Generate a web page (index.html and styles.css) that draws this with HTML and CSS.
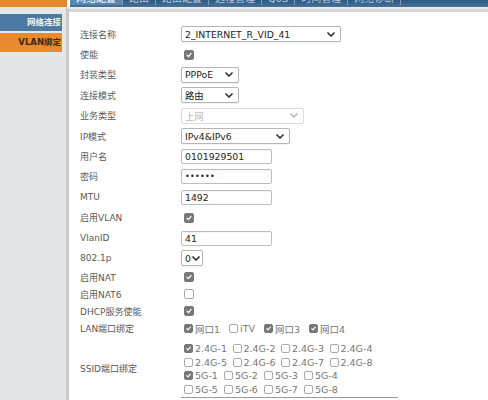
FILE: index.html
```html
<!DOCTYPE html>
<html lang="zh-CN">
<head>
<meta charset="UTF-8" />
<meta name="viewport" content="width=device-width, initial-scale=1" />
<title>网络连接</title>
<link rel="stylesheet" href="styles.css">
</head>
<body>

<div class="top">
  <div class="top-side"></div>
  <div class="tabs">
    <span class="tab on">网络配置</span>
    <span class="tab">路由</span>
    <span class="tab">路由配置</span>
    <span class="tab">远程管理</span>
    <span class="tab">QoS</span>
    <span class="tab">时间管理</span>
    <span class="tab">网络诊断</span>
  </div>
</div>

<div class="wrap">
  <aside class="side">
    <a class="nav blue">网络连接</a>
    <a class="nav orange">VLAN绑定</a>
  </aside>

  <main class="main">
    <div class="form">
      <div class="row"><label>连接名称</label>
        <div class="sel w-name"><span>2_INTERNET_R_VID_41</span><svg class="chev" viewBox="0 0 8 5"><polyline points="1,1 4,4 7,1"/></svg></div>
      </div>
      <div class="row"><label>使能</label><span class="cb on solo"><svg viewBox="0 0 10 10"><polyline points="2.5,5.2 4.3,7 7.6,3"/></svg></span></div>
      <div class="row"><label>封装类型</label>
        <div class="sel w-mode"><span>PPPoE</span><svg class="chev" viewBox="0 0 8 5"><polyline points="1,1 4,4 7,1"/></svg></div>
      </div>
      <div class="row"><label>连接模式</label>
        <div class="sel w-mode"><span>路由</span><svg class="chev" viewBox="0 0 8 5"><polyline points="1,1 4,4 7,1"/></svg></div>
      </div>
      <div class="row"><label>业务类型</label>
        <div class="sel w-svc off"><span>上网</span><svg class="chev" viewBox="0 0 8 5"><polyline points="1,1 4,4 7,1"/></svg></div>
      </div>
      <div class="row"><label>IP模式</label>
        <div class="sel w-ip"><span>IPv4&amp;IPv6</span><svg class="chev" viewBox="0 0 8 5"><polyline points="1,1 4,4 7,1"/></svg></div>
      </div>
      <div class="row"><label>用户名</label><div class="inp">0101929501</div></div>
      <div class="row"><label>密码</label><div class="inp dots">••••••</div></div>
      <div class="row"><label>MTU</label><div class="inp">1492</div></div>
      <div class="row"><label>启用VLAN</label><span class="cb on solo"><svg viewBox="0 0 10 10"><polyline points="2.5,5.2 4.3,7 7.6,3"/></svg></span></div>
      <div class="row"><label>VlanID</label><div class="inp">41</div></div>
      <div class="row"><label>802.1p</label>
        <div class="sel w-pri"><span>0</span><svg class="chev" viewBox="0 0 8 5"><polyline points="1,1 4,4 7,1"/></svg></div>
      </div>
      <div class="row tight"><label>启用NAT</label><span class="cb on solo"><svg viewBox="0 0 10 10"><polyline points="2.5,5.2 4.3,7 7.6,3"/></svg></span></div>
      <div class="row tight"><label>启用NAT6</label><span class="cb solo"></span></div>
      <div class="row tight"><label>DHCP服务使能</label><span class="cb on solo"><svg viewBox="0 0 10 10"><polyline points="2.5,5.2 4.3,7 7.6,3"/></svg></span></div>
      <div class="row lan"><label>LAN端口绑定</label>
        <div class="opts wide">
          <span class="opt"><span class="cb sm on"><svg viewBox="0 0 10 10"><polyline points="2.5,5.2 4.3,7 7.6,3"/></svg></span>网口1</span>
          <span class="opt"><span class="cb sm"></span>iTV</span>
          <span class="opt"><span class="cb sm on"><svg viewBox="0 0 10 10"><polyline points="2.5,5.2 4.3,7 7.6,3"/></svg></span>网口3</span>
          <span class="opt"><span class="cb sm on"><svg viewBox="0 0 10 10"><polyline points="2.5,5.2 4.3,7 7.6,3"/></svg></span>网口4</span>
        </div>
      </div>
      <div class="row ssid"><label>SSID端口绑定</label>
        <div class="ssid-list">
          <div class="opts">
            <span class="opt"><span class="cb sm on"><svg viewBox="0 0 10 10"><polyline points="2.5,5.2 4.3,7 7.6,3"/></svg></span>2.4G-1</span>
            <span class="opt"><span class="cb sm"></span>2.4G-2</span>
            <span class="opt"><span class="cb sm"></span>2.4G-3</span>
            <span class="opt"><span class="cb sm"></span>2.4G-4</span>
          </div>
          <div class="opts">
            <span class="opt"><span class="cb sm"></span>2.4G-5</span>
            <span class="opt"><span class="cb sm"></span>2.4G-6</span>
            <span class="opt"><span class="cb sm"></span>2.4G-7</span>
            <span class="opt"><span class="cb sm"></span>2.4G-8</span>
          </div>
          <div class="opts">
            <span class="opt"><span class="cb sm on"><svg viewBox="0 0 10 10"><polyline points="2.5,5.2 4.3,7 7.6,3"/></svg></span>5G-1</span>
            <span class="opt"><span class="cb sm"></span>5G-2</span>
            <span class="opt"><span class="cb sm"></span>5G-3</span>
            <span class="opt"><span class="cb sm"></span>5G-4</span>
          </div>
          <div class="opts">
            <span class="opt"><span class="cb sm"></span>5G-5</span>
            <span class="opt"><span class="cb sm"></span>5G-6</span>
            <span class="opt"><span class="cb sm"></span>5G-7</span>
            <span class="opt"><span class="cb sm"></span>5G-8</span>
          </div>
        </div>
      </div>
      <div class="rule"></div>
    </div>
  </main>
</div>

</body>
</html>
```

FILE: styles.css
```css
html, body { height: 100%; }

body {
  margin: 0;
  font-family: "DejaVu Sans", "Noto Sans CJK SC", sans-serif;
  font-size: 9px;
  color: #5a5a5a;
  background-color: #fff;
  overflow: hidden;
}

.top { display: flex; height: 7px; }
.top-side { width: 67px; background-color: #e8882c; }

.tabs {
  flex: 1;
  margin-left: 3px;
  display: flex;
  align-items: flex-end;
  overflow: hidden;
  background: linear-gradient(#2f5a82, #45719a);
  white-space: nowrap;
}

/* the tab strip is scrolled off the top, only the lower edge of the labels shows */
.tab {
  font-size: 10px;
  line-height: 12px;
  margin-bottom: 2px;
  padding: 0 6px;
  color: #b9cadb;
  border-right: 1px solid #7f9bb6;
}
.tab.on { color: #fff; background-color: #5d86ac; }

.wrap { display: flex; height: calc(100% - 7px); }

.side {
  width: 66px;
  background-color: #e4e6e7;
  padding-top: 7px;
  box-sizing: border-box;
  display: flex;
  flex-direction: column;
  gap: 2px;
}

.nav {
  display: block;
  width: 62px;
  box-sizing: border-box;
  text-align: right;
  padding-right: 1px;
  font-weight: bold;
  font-size: 8.5px;
}
.nav.blue { height: 17px; line-height: 17px; background-color: #4d7aa2; color: #f2f5f8; }
.nav.orange { height: 19px; line-height: 19px; background-color: #e98a2e; color: #3b2510; }

.main {
  flex: 1;
  border-left: 3px solid #c9c9c9;
  border-top: 2px solid #ebebeb;
  box-shadow: inset 0 3px 0 #d5d5d5;
  padding: 15px 0 0 11px;
}

.row {
  display: grid;
  grid-template-columns: 101px 1fr;
  align-items: center;
  height: 20.4px;
}
.row.tight { height: 17px; }
.row.lan { height: 18px; }
.row.ssid { height: auto; padding-top: 4px; }

.row label { white-space: nowrap; }

.sel {
  display: flex;
  align-items: center;
  justify-content: space-between;
  height: 16px;
  box-sizing: border-box;
  border: 1px solid #b5b5b5;
  border-radius: 2px;
  padding: 0 5px 0 3px;
  font-size: 9.3px;
  color: #222;
  background-color: #fff;
  box-shadow: 0 1px 1px rgba(0,0,0,0.06);
}
.sel.off { color: #bbb; border-color: #dcdcdc; box-shadow: none; }
.sel.off .chev polyline { stroke: #bbb; }

.w-name { width: 160px; }
.w-mode { width: 58px; }
.w-svc { width: 123px; }
.w-ip { width: 109px; }
.w-pri { width: 22px; padding: 0 2px 0 3px; }

.chev { width: 8px; height: 5px; }
.chev polyline { fill: none; stroke: #333; stroke-width: 1.7; stroke-linecap: round; stroke-linejoin: round; }

.inp {
  width: 91px;
  height: 15px;
  box-sizing: border-box;
  border: 1px solid #bdbdbd;
  border-radius: 2px;
  padding-left: 3px;
  line-height: 13px;
  font-size: 9.3px;
  color: #222;
  box-shadow: inset 0 1px 1px rgba(0,0,0,0.05);
}
.inp.dots { font-size: 8px; letter-spacing: 0.3px; }

.cb {
  display: inline-flex;
  align-items: center;
  justify-content: center;
  width: 10px;
  height: 10px;
  box-sizing: border-box;
  border: 1px solid #a9a9a9;
  border-radius: 2px;
  background-color: #fff;
  flex: none;
}
.cb.on { background-color: #787878; border-color: #787878; }
.cb svg { width: 10px; height: 10px; }
.cb svg polyline { fill: none; stroke: #fff; stroke-width: 1.6; stroke-linecap: round; stroke-linejoin: round; }
.cb.solo { margin-left: 3px; }
.cb.sm { width: 9px; height: 9px; margin-right: 2px; }
.cb.sm svg { width: 9px; height: 9px; }

.opts { display: flex; align-items: center; gap: 4px; padding-left: 3px; height: 13.6px; }
.opts.wide { gap: 9px; }
.opt { display: inline-flex; align-items: center; font-size: 9.5px; color: #777; white-space: nowrap; }
.ssid-list .opt { min-width: 44.5px; }
.ssid-list .opts:nth-child(n+3) .opt { min-width: 36px; }

.rule { margin: 1px 0 0 101px; width: 217px; border-top: 1px solid #9a9a9a; }
```
